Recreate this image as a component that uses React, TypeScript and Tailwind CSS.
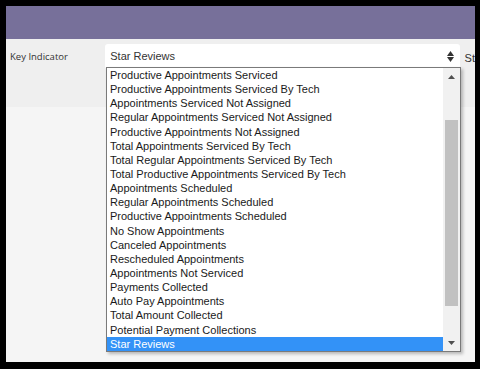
const options = [
  "Productive Appointments Serviced",
  "Productive Appointments Serviced By Tech",
  "Appointments Serviced Not Assigned",
  "Regular Appointments Serviced Not Assigned",
  "Productive Appointments Not Assigned",
  "Total Appointments Serviced By Tech",
  "Total Regular Appointments Serviced By Tech",
  "Total Productive Appointments Serviced By Tech",
  "Appointments Scheduled",
  "Regular Appointments Scheduled",
  "Productive Appointments Scheduled",
  "No Show Appointments",
  "Canceled Appointments",
  "Rescheduled Appointments",
  "Appointments Not Serviced",
  "Payments Collected",
  "Auto Pay Appointments",
  "Total Amount Collected",
  "Potential Payment Collections",
  "Star Reviews",
];

const selected = "Star Reviews";

export default function App() {
  return (
    <div className="w-[480px] h-[369px] bg-black pt-[6px] pl-[6px] pr-[5px] pb-[7px]">
      <div className="relative h-full w-full overflow-hidden bg-[#f5f5f5] flex flex-col">
        {/* top bar */}
        <div className="h-[33px] bg-[#77709a] shrink-0" />

        {/* filter row */}
        <div className="h-[68px] bg-[#efefef] flex items-start pt-[5px] shrink-0">
          <div className="w-[100px] pl-[4px] pt-[6px] text-[9.5px] text-[#333] font-['Open_Sans',sans-serif]">
            Key Indicator
          </div>
          <div className="w-[357px] h-[25px] bg-white rounded-[3px] flex items-center justify-between pl-[5px] pr-[6px] text-[11px] text-[#333] font-['Liberation_Sans',Arial,sans-serif]">
            <span>{selected}</span>
            <span className="flex flex-col items-center leading-none text-[#333]">
              <svg width="7" height="5" viewBox="0 0 7 5">
                <path d="M0 5 L3.5 0 L7 5 Z" fill="currentColor" />
              </svg>
              <svg width="7" height="5" viewBox="0 0 7 5" className="mt-[1px]">
                <path d="M0 0 L3.5 5 L7 0 Z" fill="currentColor" />
              </svg>
            </span>
          </div>
          <div className="pl-[5px] pt-[6px] text-[11px] text-[#333] font-['Liberation_Sans',Arial,sans-serif]">
            St
          </div>
        </div>

        {/* open dropdown list */}
        <div className="absolute left-[100px] top-[61px] w-[355px] h-[285px] bg-white border border-[#7a7a7a] shadow-[2px_2px_3px_rgba(0,0,0,0.25)] flex font-['Liberation_Sans',Arial,sans-serif] text-[11px]">
          <ul className="flex-1 flex flex-col">
            {options.map((o) => (
              <li
                key={o}
                className={
                  o === selected
                    ? "h-[14.15px] leading-[14.15px] pl-[3px] bg-[#3392f7] text-white"
                    : "h-[14.15px] leading-[14.15px] pl-[3px] text-[#1a1a1a]"
                }
              >
                {o}
              </li>
            ))}
          </ul>
          {/* scrollbar */}
          <div className="w-[17px] bg-[#f1f1f1] flex flex-col items-center">
            <div className="h-[17px] flex items-center justify-center text-[#505050]">
              <svg width="7" height="4" viewBox="0 0 7 4">
                <path d="M0 4 L3.5 0 L7 4 Z" fill="currentColor" />
              </svg>
            </div>
            <div className="mt-[35px] w-[13px] h-[186px] bg-[#c1c1c1]" />
            <div className="flex-1" />
            <div className="h-[17px] flex items-center justify-center text-[#505050]">
              <svg width="7" height="4" viewBox="0 0 7 4">
                <path d="M0 0 L3.5 4 L7 0 Z" fill="currentColor" />
              </svg>
            </div>
          </div>
        </div>
      </div>
    </div>
  );
}
